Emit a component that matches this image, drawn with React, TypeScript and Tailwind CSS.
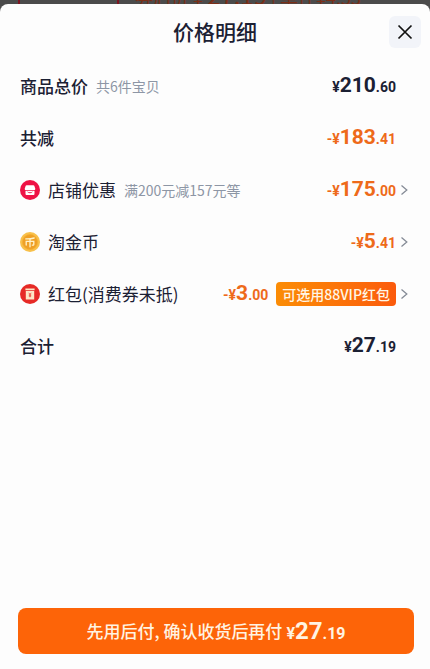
import type { ReactNode } from 'react';

type PriceProps = {
  value: string;
  negative?: boolean;
  large?: boolean;
  className?: string;
};

const Price = ({ value, negative, large, className = '' }: PriceProps) => {
  const [whole, cents] = value.split('.');
  const small = large ? 'text-base' : 'text-sm';

  return (
    <span className={`whitespace-nowrap font-['Roboto',sans-serif] font-bold leading-6 ${className}`}>
      <span className={small}>{negative ? '-¥' : '¥'}</span>
      <span className={large ? 'text-2xl' : 'text-[21px]'}>{whole}</span>
      <span className={small}>.{cents}</span>
    </span>
  );
};

const Chevron = () => (
  <svg className="h-3 w-2 shrink-0" viewBox="0 0 8 12" fill="none" stroke="#858b96" strokeWidth="1.3">
    <path d="M1.5 1.5 6.8 6 1.5 10.5" />
  </svg>
);

const ShopIcon = () => (
  <svg className="size-5 shrink-0" viewBox="0 0 20 20">
    <circle cx="10" cy="10" r="10" fill="#ee1245" />
    <path d="M6.6 5.2h6.8c.4 0 .7.2.9.6l1 3c0 1.1-.8 1.5-1.7 1.5H6.4c-.9 0-1.7-.4-1.7-1.5l1-3c.2-.4.5-.6.9-.6Z" fill="#fff" />
    <path d="M5.5 11.1h9v2.7c0 .8-.5 1.2-1.2 1.2H6.7c-.7 0-1.2-.4-1.2-1.2Z" fill="#fff" />
    <path d="M7.6 11.9c.8 1.1 4 1.1 4.8 0" stroke="#ee1245" strokeWidth=".9" fill="none" />
  </svg>
);

const CoinIcon = () => (
  <svg className="size-5 shrink-0" viewBox="0 0 20 20" fill="none">
    <circle cx="10" cy="10" r="10" fill="#f8c04a" />
    <circle cx="10" cy="10" r="7.6" fill="#efa026" stroke="#f4b032" strokeWidth=".8" />
    <path
      d="M5.8 6.9c3 .1 5.8-.2 8.4-.9M6.2 13V9.3h7.6v3.2c0 .6-.5.8-1.5.6M10 6.8v8"
      stroke="#fff3c9"
      strokeWidth="1.3"
      strokeLinecap="round"
    />
  </svg>
);

const RedPacketIcon = () => (
  <svg className="size-5 shrink-0" viewBox="0 0 20 20" fill="none">
    <circle cx="10" cy="10" r="10" fill="#e62a26" />
    <path d="M5.4 4.4h9.2v1.9H5.4ZM5.8 6.9h8.4v8.5H5.8Z" fill="#fde6c6" />
    <path d="m8.8 8.8 1.2 1.7 1.2-1.7M10 10.5v2.8M8.8 11h2.4M8.8 12.1h2.4" stroke="#e62a26" strokeWidth=".7" />
  </svg>
);

type RowProps = {
  label: string;
  note?: string;
  icon?: ReactNode;
  children: ReactNode;
};

const Row = ({ label, note, icon, children }: RowProps) => (
  <li className="flex h-[52px] items-center justify-between">
    <div className="flex items-center gap-2 whitespace-nowrap">
      {icon}
      <span className={`text-[17px] ${icon ? '' : 'font-medium'}`}>{label}</span>
      {note && <span className="text-sm text-[#8d96a5]">{note}</span>}
    </div>
    {children}
  </li>
);

const App = () => (
  <div className="flex min-h-screen flex-col bg-[#4b4b4b] font-['Noto_Sans_CJK_SC',sans-serif] text-[#1b2033]">
    <div className="flex h-1 items-end gap-4 overflow-hidden whitespace-nowrap pl-[18px] text-[#7a2f18]">
      <span className="h-1 w-[101px] shrink-0 border-x-2 border-[#7c1420]" />
      <span className="text-lg leading-[14px]">
        券后价 ¥ <span className="text-2xl leading-[14px]">27.19</span> | 单件¥4.53
      </span>
    </div>
    <main className="flex grow flex-col rounded-t-lg bg-[#fdfdfd]">
      <header className="grid h-14 grid-cols-[1fr_auto_1fr] items-center px-[9px]">
        <h1 className="col-start-2 text-[21px] font-medium">价格明细</h1>
        <button
          type="button"
          aria-label="关闭"
          className="flex size-8 items-center justify-center justify-self-end rounded-md bg-[#f2f4f9]"
        >
          <svg className="size-4" viewBox="0 0 16 16" fill="none" stroke="#111" strokeWidth="1.7">
            <path d="m1.5 1.5 13 13M14.5 1.5l-13 13" />
          </svg>
        </button>
      </header>

      <ul className="pl-5 pr-[22px]">
        <Row label="商品总价" note="共6件宝贝">
          <Price value="210.60" className="pr-3" />
        </Row>
        <Row label="共减">
          <Price value="183.41" negative className="pr-3 text-[#ee6a1a]" />
        </Row>
        <Row label="店铺优惠" note="满200元减157元等" icon={<ShopIcon />}>
          <a href="#shop" className="flex items-center gap-1">
            <Price value="175.00" negative className="text-[#ee6a1a]" />
            <Chevron />
          </a>
        </Row>
        <Row label="淘金币" icon={<CoinIcon />}>
          <a href="#coins" className="flex items-center gap-1">
            <Price value="5.41" negative className="text-[#ee6a1a]" />
            <Chevron />
          </a>
        </Row>
        <Row label="红包(消费券未抵)" icon={<RedPacketIcon />}>
          <a href="#packet" className="flex items-center gap-1">
            <Price value="3.00" negative className="pr-1 text-[#ee6a1a]" />
            <span className="flex h-6 items-center whitespace-nowrap rounded-sm bg-linear-to-r from-[#fb8c05] to-[#fb5a0c] px-1.5 text-sm font-medium text-[#fff6e6]">
              可选用88VIP红包
            </span>
            <Chevron />
          </a>
        </Row>
        <Row label="合计">
          <Price value="27.19" className="pr-3" />
        </Row>
      </ul>

      <footer className="mt-auto pb-[15px] pl-[18px] pr-4">
        <button
          type="button"
          className="flex h-[46px] w-full items-center justify-center gap-1 rounded-lg bg-[#fd6408] text-[17px] font-medium text-[#fff3e2]"
        >
          先用后付, 确认收货后再付
          <Price value="27.19" large />
        </button>
      </footer>
    </main>
  </div>
);

export default App;
